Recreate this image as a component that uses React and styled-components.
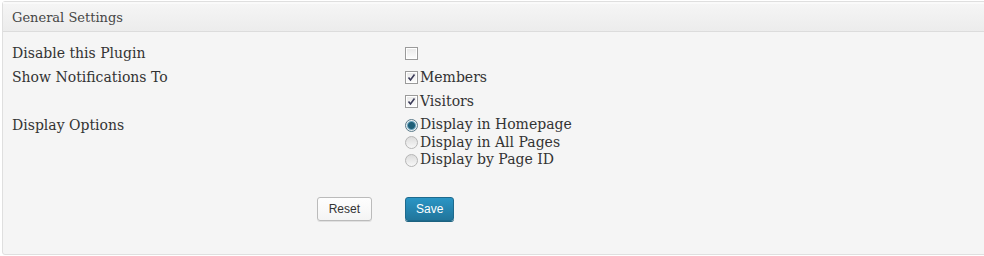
import React from 'react';
import styled, { createGlobalStyle } from 'styled-components';

const GlobalStyle = createGlobalStyle`
  html, body {
    margin: 0;
    padding: 0;
    background: #ffffff;
  }
  body {
    font-family: "DejaVu Serif", Georgia, serif;
    color: #333;
  }
`;

const Page = styled.div`
  width: 984px;
  height: 256px;
  padding: 1px 0 0 2px;
  box-sizing: border-box;
  overflow: hidden;
`;

const Panel = styled.div`
  width: 1000px;
  height: 254px;
  box-sizing: border-box;
  border: 1px solid #dfdfdf;
  border-radius: 3px;
  background: #f5f5f5;
  box-shadow: inset 0 1px 0 #fff;
`;

const PanelHeader = styled.div`
  height: 30px;
  box-sizing: border-box;
  padding: 0 9px;
  display: flex;
  align-items: center;
  font-size: 13px;
  color: #464646;
  background: linear-gradient(to bottom, #f5f5f5, #ececec);
  border-top: 2px solid #fafafa;
  border-bottom: 1px solid #dcdcdc;
`;

const Form = styled.div`
  padding: 9px 9px 0;
  display: grid;
  grid-template-columns: 393px 1fr;
`;

const Label = styled.div`
  font-size: 14px;
  color: #333;
  line-height: 24px;
`;

const Field = styled.div`
  display: flex;
  flex-direction: column;
  padding-top: ${p => p.$pt || 0}px;
`;

const Option = styled.label`
  display: flex;
  align-items: center;
  min-height: ${p => p.$lh || 24}px;
  font-size: 14px;
  line-height: ${p => p.$lh || 24}px;
  color: #333;
`;

const Box = styled.span`
  width: 11px;
  height: 11px;
  margin: 1px 2px 0 0;
  border: 1px solid #9a9a9a;
  background: linear-gradient(to bottom, #e8e8e8, #fdfdfd);
  box-shadow: inset 0 0 0 1px #fff;
  display: inline-flex;
  align-items: center;
  justify-content: center;
  flex: none;
`;

const Radio = styled.span`
  width: 11px;
  height: 11px;
  margin: 1px 2px 0 0;
  border-radius: 50%;
  border: 1px solid ${p => (p.$on ? '#5a7a8a' : '#b5b5b5')};
  background: ${p => (p.$on
    ? 'radial-gradient(circle, #1f5f78 0 3px, #6aa3bd 4px, #e8eef1 5px)'
    : 'linear-gradient(to bottom, #dcdcdc, #f7f7f7)')};
  flex: none;
`;

const Actions = styled.div`
  grid-column: 1 / 3;
  display: grid;
  grid-template-columns: 393px 1fr;
  margin-top: 28px;
`;

const ResetCell = styled.div`
  display: flex;
  justify-content: flex-end;
  padding-right: 33px;
`;

const Button = styled.button`
  height: 24px;
  padding: 0 ${p => p.$px}px;
  font-family: "Liberation Sans", Arial, sans-serif;
  font-size: 12px;
  border-radius: 3px;
  cursor: pointer;
`;

const ResetButton = styled(Button)`
  color: #333;
  border: 1px solid #bbb;
  background: linear-gradient(to bottom, #fefefe, #f4f4f4);
  box-shadow: 0 1px 0 #e0e0e0;
`;

const SaveButton = styled(Button)`
  color: #fff;
  border: 1px solid #1e6a8d;
  background: linear-gradient(to bottom, #2a95c5, #21759b);
  box-shadow: 0 1px 0 #1c6280;
`;

const Check = () => (
  <svg width="9" height="9" viewBox="0 0 9 9">
    <path d="M1.5 4.5 L3.5 7 L7.5 1.5" fill="none" stroke="#3c3c5a" strokeWidth="1.6" />
  </svg>
);

const App = () => (
  <>
    <GlobalStyle />
    <Page>
      <Panel>
        <PanelHeader>General Settings</PanelHeader>
        <Form>
          <Label>Disable this Plugin</Label>
          <Field>
            <Option><Box /></Option>
          </Field>
          <Label>Show Notifications To</Label>
          <Field>
            <Option><Box><Check /></Box>Members</Option>
            <Option><Box><Check /></Box>Visitors</Option>
          </Field>
          <Label>Display Options</Label>
          <Field $pt={3}>
            <Option $lh={17.5}><Radio $on />Display in Homepage</Option>
            <Option $lh={17.5}><Radio />Display in All Pages</Option>
            <Option $lh={17.5}><Radio />Display by Page ID</Option>
          </Field>
          <Actions>
            <ResetCell>
              <ResetButton $px={11}>Reset</ResetButton>
            </ResetCell>
            <div>
              <SaveButton $px={10}>Save</SaveButton>
            </div>
          </Actions>
        </Form>
      </Panel>
    </Page>
  </>
);

export default App;
